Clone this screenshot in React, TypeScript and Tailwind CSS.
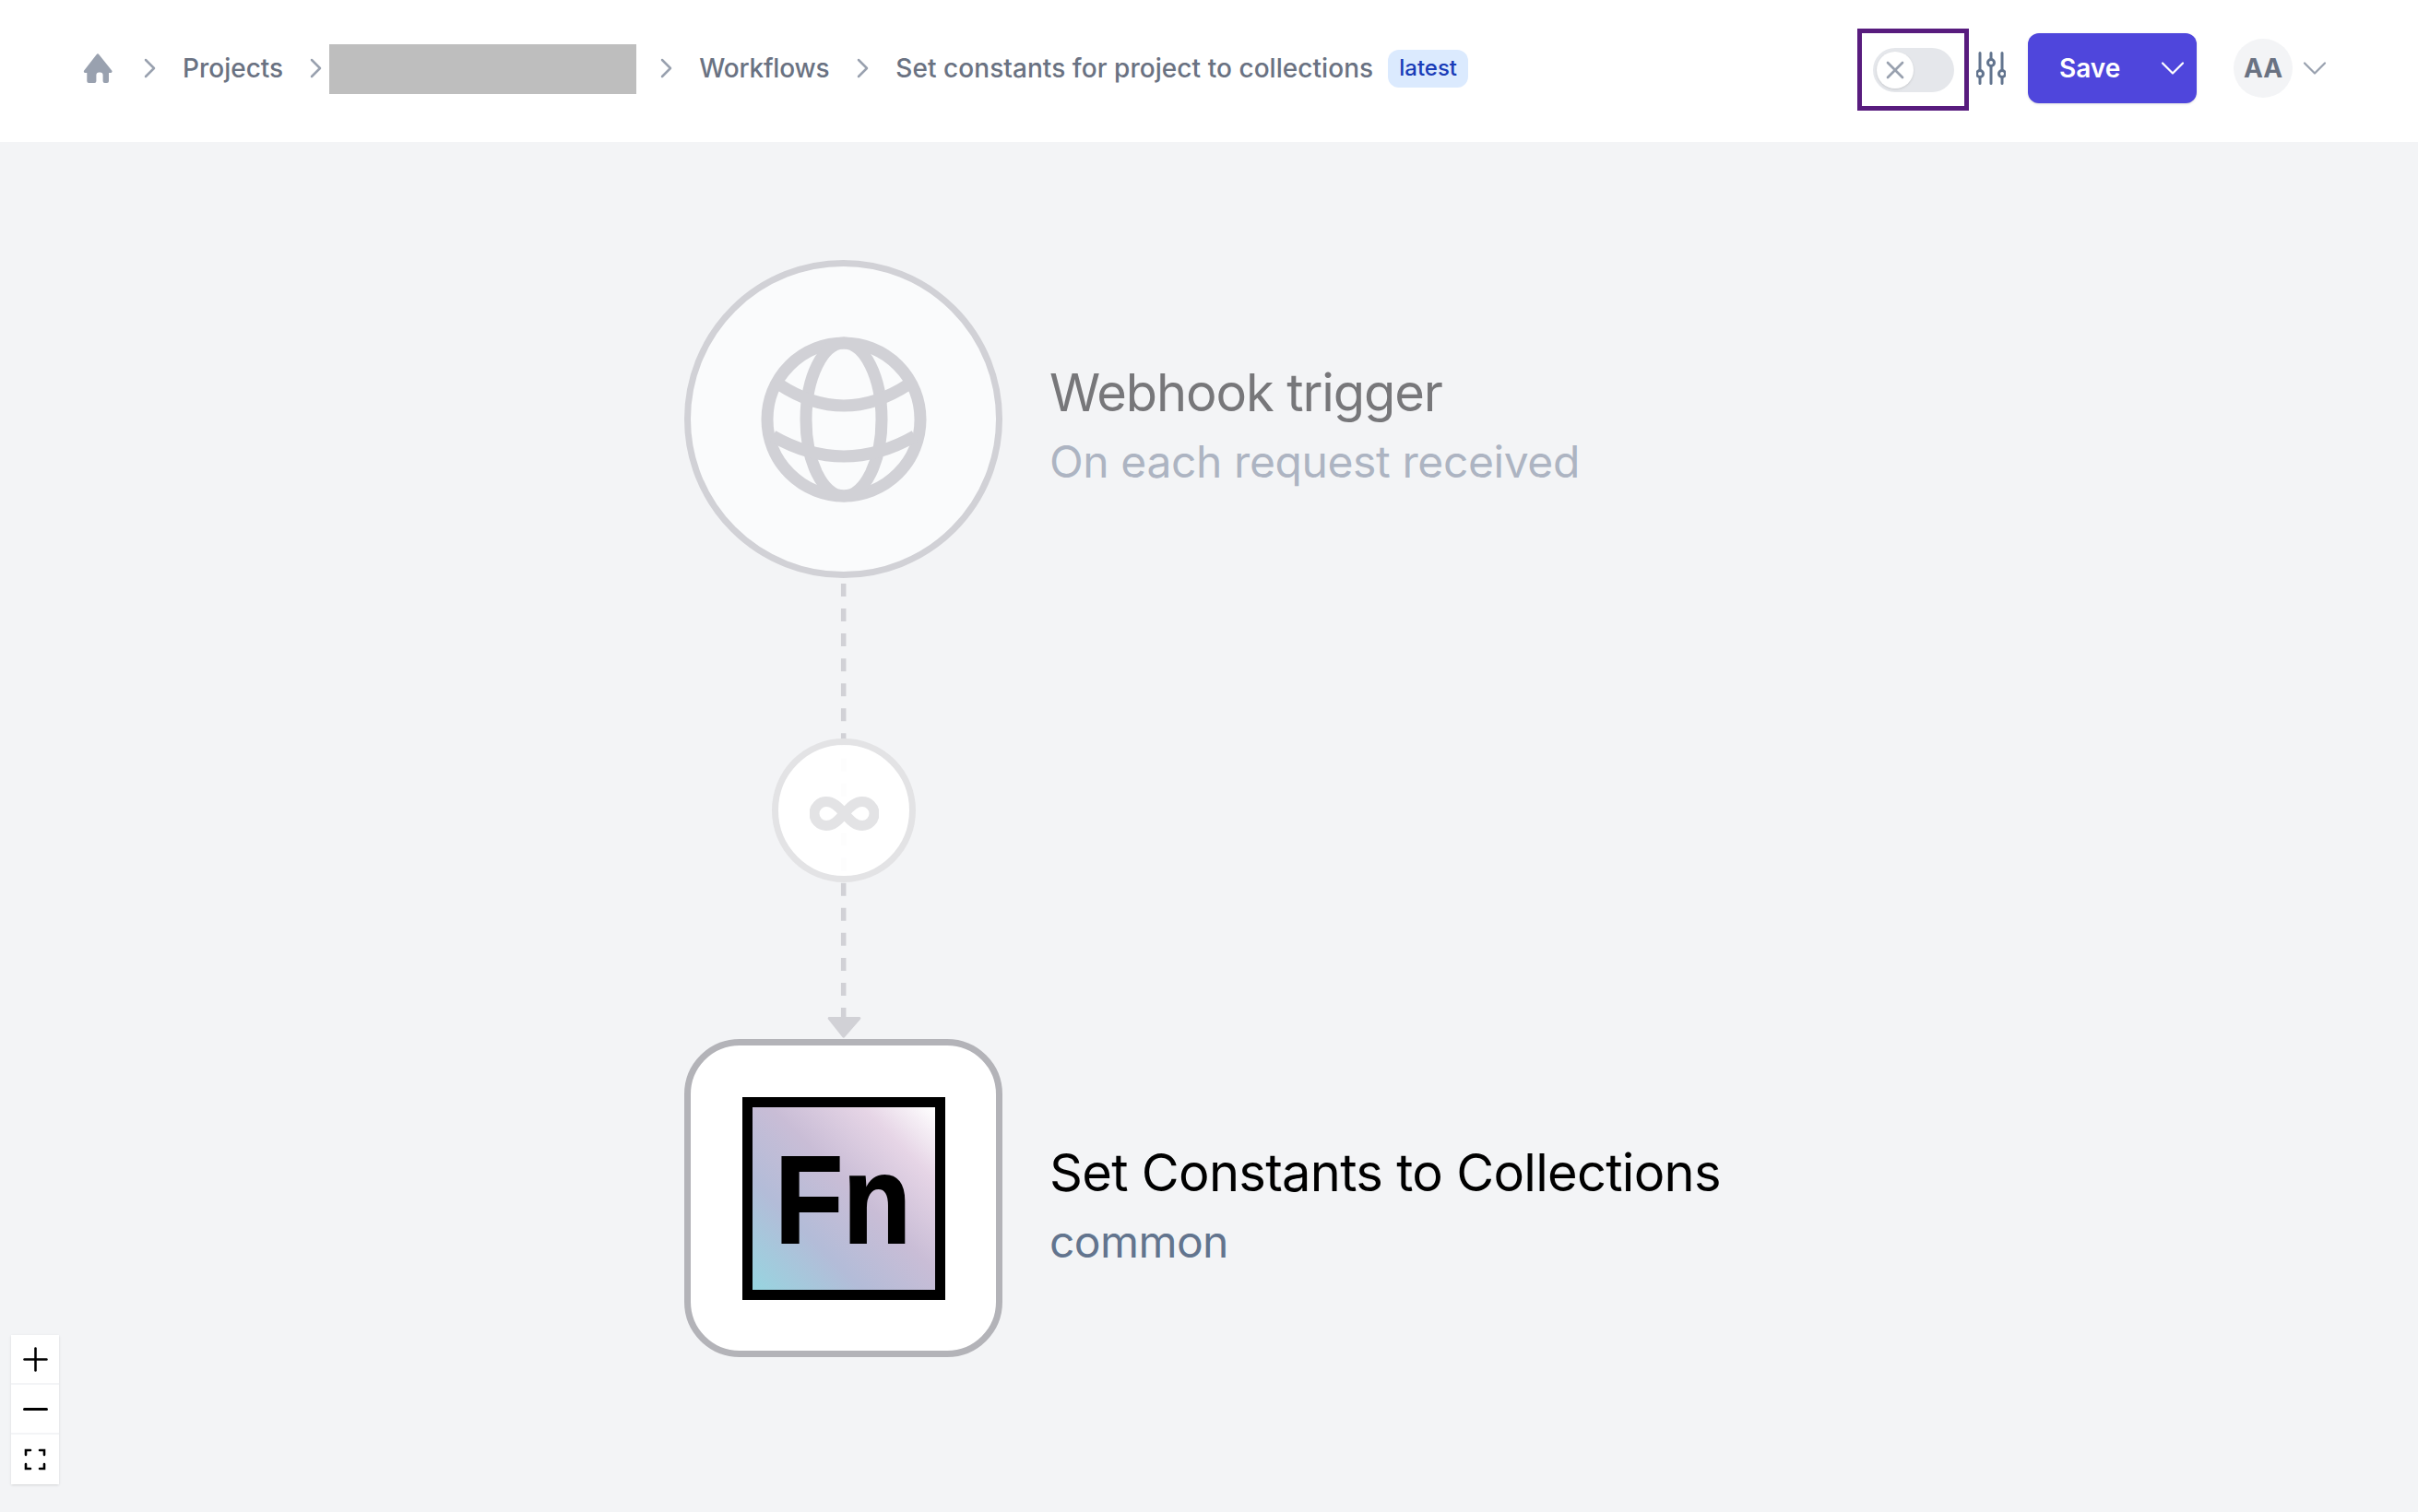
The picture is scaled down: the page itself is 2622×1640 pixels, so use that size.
import { ChevronDown, Minus, Plus, X } from "lucide-react";

const Crumb = () => (
  <svg viewBox="0 0 13 22" className="w-[13px] h-[22px] text-gray-400 shrink-0" fill="none" stroke="currentColor" strokeWidth="2.5" strokeLinecap="round" strokeLinejoin="round">
    <path d="M2 2l9 9-9 9" />
  </svg>
);

const HomeIcon = () => (
  <svg viewBox="0 0 32 32" className="w-8 h-8 text-gray-400 shrink-0" fill="currentColor">
    <path d="M14.6 1.2a1.8 1.8 0 0 1 2.8 0l13.8 17.2c.9 1.2.1 2.6-1.3 2.6h-1.900v9a2 2 0 0 1-2 2h-2.400a2 2 0 0 1-2-2v-6.500a3 3 0 0 0-3-3h-1.200a3 3 0 0 0-3 3V30a2 2 0 0 1-2 2H6.300a2 2 0 0 1-2-2v-9H2.500c-1.400 0-2.200-1.400-1.300-2.600z" />
  </svg>
);

const SlidersIcon = () => (
  <svg viewBox="0 0 32 36" className="w-8 h-9 text-slate-500" fill="none" stroke="currentColor" strokeWidth="3" strokeLinecap="round">
    <path d="M4 1.500v19M4 27.500v7M16 1.500v7M16 15.500v19M28 1.500v19M28 27.500v7" />
    <circle cx="4" cy="24" r="3.500" />
    <circle cx="16" cy="12" r="3.500" />
    <circle cx="28" cy="24" r="3.500" />
  </svg>
);

const GlobeIcon = () => (
  <svg viewBox="0 0 180 180" className="w-[180px] h-[180px] text-[#d1d1d6]" fill="none" stroke="currentColor" strokeWidth="13">
    <circle cx="90" cy="90" r="83" />
    <ellipse cx="90" cy="90" rx="41" ry="83" />
    <path d="M20 52Q90 98 160 52" />
    <path d="M13 108Q90 152 167 108" />
  </svg>
);

const InfinityIcon = () => (
  <svg viewBox="0 0 75 37" className="w-[75px] h-[37px] text-[#e3e3e5] mt-[6px]" fill="none" stroke="currentColor" strokeWidth="11">
    <path d="M37.500 18.500C30 10 25 5.500 18 5.500a13 13 0 0 0 0 26C25 31.500 30 27 37.500 18.500C45 10 50 5.500 57 5.500a13 13 0 0 1 0 26C50 31.500 45 27 37.500 18.500z" />
  </svg>
);

const Toggle = () => (
  <div className="w-[121px] h-[89px] border-[5px] border-[#581c7e] flex items-center justify-center mt-[3px]">
    <div className="w-[88px] h-[48px] rounded-full bg-gray-200 flex items-center pl-1">
      <div className="w-10 h-10 rounded-full bg-white shadow flex items-center justify-center">
        <X className="w-8 h-8 text-gray-400 shrink-0" strokeWidth={2} />
      </div>
    </div>
  </div>
);

const Header = () => (
  <header className="h-[154px] bg-white flex items-center pl-[90px] pb-[6px] font-medium text-[28px] text-gray-500">
    <HomeIcon />
    <div className="ml-[34px]"><Crumb /></div>
    <span className="ml-[29px]">Projects</span>
    <div className="ml-[29px]"><Crumb /></div>
    <div className="ml-2 mt-[2px] w-[333px] h-[54px] bg-[#bebebe]" />
    <div className="ml-[26px]"><Crumb /></div>
    <span className="ml-[29px] tracking-[-0.2px]">Workflows</span>
    <div className="ml-[30px]"><Crumb /></div>
    <span className="ml-[29px] tracking-[0.05px]">Set constants for project to collections</span>
    <span className="ml-4 h-[41px] px-3 rounded-xl bg-blue-100 text-blue-800 text-[24px] flex items-center">latest</span>
    <div className="ml-auto flex items-center pr-[90px]">
      <Toggle />
      <div className="ml-2"><SlidersIcon /></div>
      <button className="ml-6 w-[183px] h-[76px] rounded-xl bg-[#4f46dc] text-white font-semibold shadow-sm flex items-center pl-[34px]">
        Save
        <ChevronDown className="ml-auto mr-1 w-11 h-11" strokeWidth={1.2} />
      </button>
      <div className="ml-10 w-16 h-16 rounded-full bg-gray-100 font-bold flex items-center justify-center">AA</div>
      <ChevronDown className="ml-[2px] w-11 h-11 text-gray-400" strokeWidth={1.2} />
    </div>
  </header>
);

const Edge = () => (
  <svg className="absolute left-[900px] top-[475px] w-[30px] h-[500px] overflow-visible" viewBox="0 0 30 500" fill="none">
    <path d="M14.700 4V480" stroke="#d1d1d6" strokeWidth="5.500" strokeDasharray="14 13.060" />
    <path d="M-1 474h33a1.500 1.500 0 0 1 1 2.500L16 496a1.500 1.500 0 0 1-2.500 0L-2 476.500a1.500 1.500 0 0 1 1-2.500z" fill="#d1d1d6" />
  </svg>
);

const ZoomControls = () => (
  <div className="absolute left-3 bottom-[30px] w-[52px] bg-white shadow text-black flex flex-col divide-y-2 divide-gray-100">
    <div className="h-[54px] flex items-center justify-center"><Plus className="w-[41px] h-[41px] shrink-0" strokeWidth={1.5} /></div>
    <div className="h-[54px] flex items-center justify-center"><Minus className="w-[41px] h-[41px] shrink-0" strokeWidth={1.8} /></div>
    <div className="h-[54px] flex items-center justify-center">
      <svg viewBox="0 0 24 24" className="w-6 h-6" fill="none" stroke="currentColor" strokeWidth="2.600" strokeLinecap="round">
        <path d="M2 7V2h5M17 2h5v5M22 17v5h-5M7 22H2v-5" />
      </svg>
    </div>
  </div>
);

const Canvas = () => (
  <main className="relative flex-1 bg-gray-100 overflow-hidden">
    <Edge />

    <div className="absolute left-[742px] top-[128px] w-[345px] h-[345px] rounded-full border-[7px] border-[#d1d1d6] bg-[#fafbfc] flex items-center justify-center">
      <GlobeIcon />
    </div>
    <div className="absolute left-[1138px] top-[236px]">
      <div className="text-[56px] leading-[72px] tracking-[-1.1px] text-[#77777a]">Webhook trigger</div>
      <div className="mt-[9px] text-[48px] leading-[60px] tracking-[-0.4px] text-[#adb4c2]">On each request received</div>
    </div>

    <div className="absolute left-[837px] top-[647px] w-[156px] h-[156px] rounded-full border-[7px] border-[#e3e3e5] bg-white/95 flex items-center justify-center">
      <InfinityIcon />
    </div>

    <div className="absolute left-[742px] top-[973px] w-[345px] h-[345px] rounded-[60px] border-[7px] border-[#b3b3b8] bg-white flex items-center justify-center">
      <div className="w-[220px] h-[220px] border-[11px] border-black bg-[linear-gradient(45deg,#97d5e0_0%,#b3bcd8_30%,#c9bdd6_55%,#e6d5e6_80%,#ffffff_100%)] flex items-center justify-center">
        <span className="font-['Liberation_Sans',sans-serif] font-bold text-[136px] leading-none text-black scale-x-[0.89] mt-[2px] [-webkit-text-stroke:2px_black]">Fn</span>
      </div>
    </div>
    <div className="absolute left-[1138px] top-[1082px]">
      <div className="text-[56px] leading-[72px] tracking-[-0.7px] text-black">Set Constants to Collections</div>
      <div className="mt-[9px] text-[48px] leading-[60px] tracking-[-0.6px] text-slate-500">common</div>
    </div>

    <ZoomControls />
  </main>
);

export default function App() {
  return (
    <div className="w-[2622px] h-[1640px] flex flex-col font-['Inter',sans-serif]">
      <Header />
      <Canvas />
    </div>
  );
}
